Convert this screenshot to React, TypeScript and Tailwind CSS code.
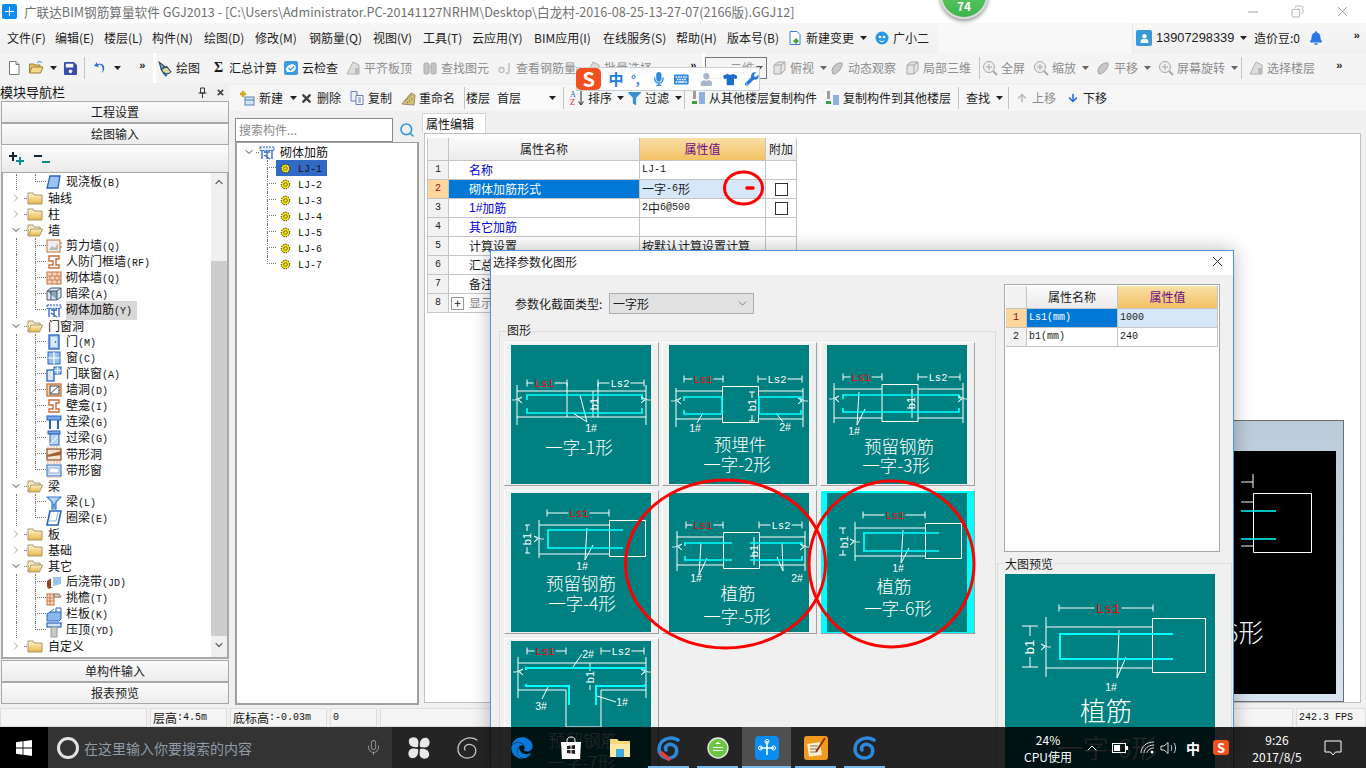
import React from "react";
import { FaEdge, FaMicrophone, FaKeyboard, FaTshirt, FaWrench, FaUser, FaBell, FaSave, FaFilter, FaArrowUp, FaArrowDown, FaTimes } from "react-icons/fa";
import { Mic, ChevronUp, ChevronDown, ChevronRight, X, Minus, Copy, Search } from "lucide-react";

type N = React.ReactNode;
const Ic = ({ children, s = 16, v = "0 0 16 16", c = "" }: { children: N; s?: number; v?: string; c?: string }) => (
  <svg width={s} height={s} viewBox={v} className={"shrink-0 " + c}>{children}</svg>
);

/* SimSun-like mixed text: ascii runs in a 6px-wide mono */
const Sim = ({ t }: { t: string }) => (
  <>
    {t.split(/([\x20-\x7e]+)/).filter(Boolean).map((p, i) =>
      /^[\x20-\x7e]+$/.test(p) ? (
        <span key={i} className="font-['Liberation_Mono',monospace] text-[10px]">{p}</span>
      ) : (
        <span key={i}>{p}</span>
      )
    )}
  </>
);

const Caret = ({ c = "#222" }: { c?: string }) => (
  <svg width="7" height="4" viewBox="0 0 7 4" className="shrink-0"><path d="M0 0H7L3.5 4Z" fill={c} /></svg>
);
const More = () => <span className="font-['Liberation_Mono',monospace] text-[11px] font-bold leading-none text-[#222]">»</span>;
const Div = ({ c = "" }: { c?: string }) => <span className={"h-[22px] w-px shrink-0 bg-[#c4c4c4] " + c} />;

const Tool = ({ w, icon, label, gray, caret, gap = "gap-[3px]" }: { w: string; icon?: N; label?: string; gray?: boolean; caret?: boolean; gap?: string }) => (
  <div className={"flex shrink-0 items-center whitespace-nowrap " + w + " " + gap + " " + (gray ? "text-[#8c8c8c]" : "text-[#1c1c1c]")}>
    {icon}
    {label && <span>{label}</span>}
    {caret && <span className="ml-[3px]"><Caret c={gray ? "#666" : "#222"} /></span>}
  </div>
);

/* ---------- toolbar icons ---------- */
const GrayBox = () => (
  <Ic><path d="M3 5 7 2H14V10L10 14H3Z" fill="#e4e4e4" stroke="#a8a8a8" /><path d="M3 5H10V14M10 5 14 2" fill="none" stroke="#a8a8a8" /></Ic>
);
const GrayBlob = () => (
  <Ic><path d="M3 11C3 6 9 2 13 3 14 7 9 14 4 14Z" fill="#c8c8c8" stroke="#a0a0a0" /></Ic>
);
const GrayMag = () => (
  <Ic><circle cx="7" cy="7" r="5.5" fill="#eee" stroke="#a8a8a8" /><path d="M11 11 15 15" stroke="#a8a8a8" strokeWidth="2" /><path d="M4 7H10M7 4V10" stroke="#aaa" /></Ic>
);
const FileI = () => <Ic><path d="M3.5 1.5H10L13 4.5V14.5H3.5Z" fill="#fff" stroke="#777" /><path d="M10 1.5V4.5H13" fill="#ddd" stroke="#777" /></Ic>;
const OpenI = () => <Ic><path d="M1.5 13V4H6L7 5H12V7" fill="#e8c46c" stroke="#a08030" /><path d="M1.5 13 4 7H15L12.5 13Z" fill="#f5d98a" stroke="#a08030" /><path d="M9 3C11 1 13 1 14 3" fill="none" stroke="#3a7fd0" /></Ic>;
const UndoI = () => <Ic><path d="M5 2 2 6 7 7 6 5C9 4 12 6 10 13 14 9 13 2 5 4Z" fill="#2a6ac8" /></Ic>;
const DrawI = () => <Ic s={17}><path d="M3 2 8 6 5 9Z" fill="#8ab" stroke="#246" /><path d="M5 9C7 14 12 14 14 11L10 6Z" fill="#e0d6a0" stroke="#246" /><path d="M7 12 10 15" stroke="#26a" strokeWidth="2" /></Ic>;
const CloudI = () => <Ic><rect x="1" y="1" width="14" height="14" rx="2" fill="#3a9be0" /><path d="M3 10C3 6 8 3 12 5 14 8 12 12 8 12H4Z" fill="#fff" /><path d="M5.5 8 7.5 10 11 6.5" fill="none" stroke="#3a9be0" strokeWidth="1.4" /></Ic>;
const GrayPage = () => <Ic><path d="M2 14 8 2 14 5V14Z" fill="#ddd" stroke="#b0b0b0" /><path d="M10 8H14V14H10Z" fill="#bbb" /></Ic>;
const Binoc = () => <Ic><rect x="2" y="3" width="5" height="11" rx="1.5" fill="#c4c4c4" stroke="#aaa" /><rect x="9" y="3" width="5" height="11" rx="1.5" fill="#c4c4c4" stroke="#aaa" /><path d="M7 7H9" stroke="#aaa" /></Ic>;
const GrayChain = () => <Ic><circle cx="4.5" cy="10" r="2.5" fill="none" stroke="#bbb" strokeWidth="1.3" /><path d="M12 3V12C12 14 9 14 9 12" fill="none" stroke="#bbb" strokeWidth="1.3" /></Ic>;
const NewI = () => <Ic><rect x="6" y="7" width="9" height="8" fill="#cfe3f6" stroke="#5a80b8" /><path d="M6 10H15" stroke="#5a80b8" /><path d="M4 1V7M1 4H7" stroke="#d2a520" strokeWidth="2.4" /></Ic>;
const CopyI = () => <Ic><path d="M2 1.5H8V11H2Z" fill="#eef" stroke="#6a7fb0" /><path d="M7 5.5H14V14.5H7Z" fill="#fff" stroke="#6a7fb0" /><path d="M9 8H12M9 10H12M9 12H12" stroke="#6a7fb0" /></Ic>;
const RenameI = () => <Ic><path d="M2 14 11 3 15 5 14 15Z" fill="#d8c070" stroke="#987" /><path d="M5 11 12 5M7 13 13 8" stroke="#675" strokeDasharray="1.5 1" /></Ic>;
const SortI = () => (
  <Ic s={18} v="0 0 18 18">
    <text x="2" y="8" fontSize="8" fontFamily="Liberation Serif" fill="#1a5fb4">A</text>
    <text x="2" y="16" fontSize="8" fontFamily="Liberation Serif" fill="#c02020">Z</text>
    <path d="M13 2V15M10.5 12.5 13 16 15.5 12.5" stroke="#222" fill="none" />
  </Ic>
);
const StackI = ({ d }: { d?: boolean }) => (
  <Ic>
    <path d="M3 2H6M3 4H6M3 6H6M3 8H6" stroke="#444" />
    <path d={d ? "M9 6H15M9 8H15M9 10H15M9 12H15M9 14H15" : "M9 3H15M9 5H15M9 7H15M9 9H15M9 11H15M9 13H15"} stroke="#2a6ac8" strokeWidth="1.2" />
    <path d="M2 11H7V14H2Z" fill="#3aa03a" />
  </Ic>
);

/* ---------- tree icons ---------- */
const Folder = ({ open }: { open?: boolean }) =>
  open ? (
    <Ic><defs><linearGradient id="fo" x1="0" y1="0" x2="0" y2="1"><stop offset="0" stopColor="#fff6cc" /><stop offset="1" stopColor="#e6ae3c" /></linearGradient></defs><path d="M1 14V3H6L7 5H13V7" fill="#f8edc0" stroke="#a89870" /><path d="M1 14 4 7H15.5L12.5 14Z" fill="url(#fo)" stroke="#a89870" /></Ic>
  ) : (
    <Ic><defs><linearGradient id="fc" x1="0" y1="0" x2="0" y2="1"><stop offset="0" stopColor="#fff8d8" /><stop offset="1" stopColor="#eab23e" /></linearGradient></defs><path d="M1 14V3H6L7 5H15V14Z" fill="url(#fc)" stroke="#a89870" /></Ic>
  );
const B = "#2a62c0";
const O = "#c8703a";
const treeIcons: Record<string, N> = {
  slab: <path d="M4 2H14L12 14H1Z" fill="#9cc2f0" stroke={B} strokeWidth="1.3" />,
  shear: <><rect x="1" y="2" width="13" height="12" fill="#eee" stroke={O} /><path d="M3 12 6 8 9 10 12 5V12Z" fill="#bbb" /><path d="M15 4V12" stroke={O} strokeDasharray="2 2" /></>,
  door2: <path d="M3 2H13V5H10V11H13V14H3V11H7V7H3Z" fill="#fff" stroke={O} strokeWidth="1.4" />,
  brick: <><rect x="1" y="2" width="14" height="12" fill="#f4d4c0" stroke={O} /><path d="M1 6H15M1 10H15M6 2V6M11 2V6M4 6V10M9 6V10M13 6V10M6 10V14M11 10V14" stroke={O} strokeWidth=".8" /></>,
  hide: <><path d="M1 5 5 2H15V11L11 14H1Z" fill="#dbe8f8" stroke="#456" /><path d="M1 5H11V14M11 5 15 2" fill="#8ab" stroke="#456" /><path d="M5 5V14" stroke="#456" /></>,
  rebar: <><rect x="1" y="3" width="14" height="3.5" fill="#e0ecff" stroke={B} strokeDasharray="2 1" /><path d="M3 6V15M13 6V15M5 8H11M8 8V15M5 11 11 15" fill="none" stroke={B} strokeWidth="1.3" /></>,
  door: <><rect x="3" y="1" width="10" height="14" fill="#9cc2f0" stroke={B} strokeWidth="1.3" /><rect x="5" y="3" width="6" height="10" fill="#dbe8f8" /><circle cx="9.5" cy="8" r=".7" fill="#124" /></>,
  win: <><rect x="2" y="2" width="12" height="12" fill="#9cc2f0" stroke={B} /><path d="M8 2V14M2 8H14" stroke="#fff" strokeWidth="1.2" /></>,
  dw: <><rect x="1" y="4" width="7" height="11" fill="#dbe8f8" stroke={B} strokeWidth="1.3" /><rect x="8" y="1" width="7" height="7" fill="#9cc2f0" stroke={B} /><path d="M11.5 1V8M8 4.5H15" stroke="#fff" /></>,
  hole: <><rect x="1" y="2" width="14" height="12" fill="#f4d4c0" stroke={O} strokeWidth="1.3" /><rect x="4" y="4" width="9" height="8" fill="#fff" stroke="#444" /><path d="M4 12 13 4" stroke="#444" /></>,
  tie: <><rect x="1" y="2" width="14" height="4" fill="#7aa8e8" stroke={B} /><path d="M4 6V15M12 6V15" stroke={B} strokeWidth="2" /></>,
  lintel: <><rect x="2" y="1" width="12" height="3" fill="#7aa8e8" stroke={B} /><rect x="4" y="4" width="9" height="11" fill="#b8d4f4" stroke={B} /><path d="M4 14 12 6" stroke="#fff" /></>,
  strip: <><rect x="1" y="3" width="14" height="11" fill="#f4e4d8" stroke="#8a4a20" strokeWidth="1.2" /><path d="M1 9 15 5V9L1 11Z" fill="#a06030" /><path d="M1 1H15M1 15.5H15" stroke="#f4c8b0" strokeWidth="1.5" strokeDasharray="2 1" /></>,
  strip2: <><rect x="1" y="3" width="14" height="11" fill="#dbe8f8" stroke={B} /><rect x="3" y="6" width="10" height="5" fill="#fff" stroke="#8ab0e0" /><path d="M1 1H15M1 15.5H15" stroke="#f4c8b0" strokeWidth="1.5" strokeDasharray="2 1" /></>,
  beam: <><path d="M1 3H15L10 8V15H6V8Z" fill="#b8d4f4" stroke="#3a80d0" strokeWidth="1.2" /><path d="M6 8 10 15M10 8 6 15" stroke="#3a80d0" /></>,
  ring: <><path d="M4 1H15L12 15H1Z" fill="#fff" stroke={B} strokeWidth="1.6" /><path d="M2 11H10L12 2" fill="none" stroke="#8ab0e0" /></>,
  post: <><path d="M1 7 7 3V13L3 15 1 13Z" fill="#8a4a20" /><path d="M7 3H15V10L7 12Z" fill="#9cc2f0" /><path d="M6 3V13" stroke="#fff" strokeWidth="2" /></>,
  eave: <><rect x="1" y="4" width="7" height="11" fill="#f4d4c0" stroke={O} /><path d="M1 8H8M1 11H8M4 4V15" stroke={O} strokeWidth=".8" /><path d="M8 4H13L15 7H8Z" fill="#ddd" stroke="#8a6a50" /></>,
  rail: <><path d="M1 8 4 6H15V13L13 15H1Z" fill="#8ab8ec" stroke={B} /><path d="M10 6V2H15V6M4 6 8 3" fill="none" stroke={B} /></>,
  press: <><rect x="1" y="1" width="14" height="4" fill="#cfe3f6" stroke={B} strokeWidth="1.2" /><rect x="5" y="5" width="6" height="10" fill="#c8c8c8" stroke="#999" /></>,
};

type Row = { t: string; f?: "o" | "c"; i?: string; last?: boolean; sel?: boolean };
const treeRows: Row[] = [
  { t: "现浇板(B)", i: "slab", last: true },
  { t: "轴线", f: "c" }, { t: "柱", f: "c" }, { t: "墙", f: "o" },
  { t: "剪力墙(Q)", i: "shear" }, { t: "人防门框墙(RF)", i: "door2" }, { t: "砌体墙(Q)", i: "brick" }, { t: "暗梁(A)", i: "hide" }, { t: "砌体加筋(Y)", i: "rebar", last: true, sel: true },
  { t: "门窗洞", f: "o" },
  { t: "门(M)", i: "door" }, { t: "窗(C)", i: "win" }, { t: "门联窗(A)", i: "dw" }, { t: "墙洞(D)", i: "hole" }, { t: "壁龛(I)", i: "door2" }, { t: "连梁(G)", i: "tie" }, { t: "过梁(G)", i: "lintel" }, { t: "带形洞", i: "strip" }, { t: "带形窗", i: "strip2", last: true },
  { t: "梁", f: "o" },
  { t: "梁(L)", i: "beam" }, { t: "圈梁(E)", i: "ring", last: true },
  { t: "板", f: "c" }, { t: "基础", f: "c" }, { t: "其它", f: "o" },
  { t: "后浇带(JD)", i: "post" }, { t: "挑檐(T)", i: "eave" }, { t: "栏板(K)", i: "rail" }, { t: "压顶(YD)", i: "press", last: true },
  { t: "自定义", f: "c" },
];
const dot = "border-dotted border-[#777]";
const Elbow = ({ last, w = "w-[11px]" }: { last?: boolean; w?: string }) => (
  <span className={"flex h-full shrink-0 flex-col " + w}>
    <span className={"h-[8px] w-full border-b border-l " + dot} />
    {!last && <span className={"flex-1 border-l " + dot} />}
  </span>
);
const Chev = ({ open }: { open?: boolean }) =>
  open ? <ChevronDown size={12} strokeWidth={2} className="shrink-0 text-[#444]" /> : <ChevronRight size={12} strokeWidth={2} className="shrink-0 text-[#aaa]" />;

const TreeRow = ({ r }: { r: Row }) =>
  r.f ? (
    <div className="flex h-[16px] items-center pl-[6px]">
      <Chev open={r.f === "o"} />
      <span className={"ml-[2px] w-[3px] border-b " + dot} />
      <Folder open={r.f === "o"} />
      <span className="ml-[5px] whitespace-nowrap"><Sim t={r.t} /></span>
    </div>
  ) : (
    <div className="flex h-[16px] items-center pl-[12px]">
      <span className={"h-full w-[19px] shrink-0 border-l " + dot} />
      <Elbow last={r.last} />
      <Ic>{treeIcons[r.i!]}</Ic>
      <span className={"ml-[4px] whitespace-nowrap " + (r.sel ? "bg-[#d8d8d8] pr-[5px]" : "")}><Sim t={r.t} /></span>
    </div>
  );

const NavBtn = ({ t }: { t: string }) => (
  <div className="flex h-[22px] items-center justify-center border border-[#a8a8a8] bg-gradient-to-b from-[#fbfbfb] to-[#ececec] text-[12px] text-[#1c1c1c]">{t}</div>
);

/* ---------- property tables ---------- */
const thBase = "flex items-center border-b border-r border-[#c4c4c4] ";
const idx = "justify-center bg-[#f2f2f2] ";
const Hdr = "bg-gradient-to-b from-[#fbfbfb] to-[#ebebeb] justify-center ";
const HdrSel = "bg-gradient-to-b from-[#f9dfa6] to-[#f2c263] justify-center text-[#6a0a86] ";

const mainRows: { t: string; v?: string; blue?: boolean; cb?: boolean; sel?: boolean; plus?: boolean }[] = [
  { t: "名称", v: "LJ-1", blue: true },
  { t: "砌体加筋形式", v: "一字-6形", cb: true, sel: true },
  { t: "1#加筋", v: "2 中 6@500", blue: true, cb: true },
  { t: "其它加筋", blue: true },
  { t: "计算设置", v: "按默认计算设置计算" },
  { t: "汇总信息", v: "砌体拉结筋" },
  { t: "备注" },
  { t: "显示样式", plus: true },
];

const MainTable = () => (
  <div className="ml-px grid w-[370px] grid-cols-[21px_191px_126px_31px] grid-rows-[23px_repeat(8,19px)] border-l border-[#c4c4c4] text-[12px] text-[#1c1c1c]">
    <div className={thBase + idx} />
    <div className={thBase + Hdr}>属性名称</div>
    <div className={thBase + HdrSel}>属性值</div>
    <div className={thBase + Hdr}>附加</div>
    {mainRows.map((r, i) => (
      <React.Fragment key={i}>
        <div className={thBase + (r.sel ? "justify-center bg-[#fdd69b] text-[#8a1020]" : idx)}><Sim t={String(i + 1)} /></div>
        <div className={thBase + "whitespace-nowrap " + (r.sel ? "bg-[#0078d7] pl-[20px] text-white" : r.blue ? "pl-[20px] text-[#0000e0]" : r.plus ? "pl-[2px] text-[#888]" : "pl-[20px]")}>
          {r.plus && <span className="mr-[5px] flex h-[13px] w-[13px] items-center justify-center border border-[#999] text-[12px] leading-none text-[#222]">+</span>}
          {r.t.includes("#") ? <><span className="font-['Liberation_Sans',sans-serif]">1#</span>加筋</> : r.t}
        </div>
        <div className={thBase + "relative pl-[2px] " + (r.sel ? "bg-[#d6e8f7]" : "")}>{r.v && <Sim t={r.v} />}</div>
        <div className={thBase + "justify-center"}>{r.cb && <span className="h-[13px] w-[13px] border border-[#333] bg-white" />}</div>
      </React.Fragment>
    ))}
  </div>
);

const ParamTable = () => (
  <div className="h-[268px] w-[216px] border border-[#a8a8a8] bg-white p-px">
    <div className="grid grid-cols-[21px_91px_100px] grid-rows-[23px_19px_19px] text-[12px] text-[#1c1c1c]">
      <div className={thBase + idx} />
      <div className={thBase + Hdr}>属性名称</div>
      <div className={thBase + HdrSel}>属性值</div>
      <div className={thBase + "justify-center bg-[#fdd69b] text-[#8a1020]"}><Sim t="1" /></div>
      <div className={thBase + "bg-[#0078d7] pl-[2px] text-white"}><Sim t="Ls1(mm)" /></div>
      <div className={thBase + "bg-[#d6e8f7] pl-[2px]"}><Sim t="1000" /></div>
      <div className={thBase + idx}><Sim t="2" /></div>
      <div className={thBase + "pl-[2px]"}><Sim t="b1(mm)" /></div>
      <div className={thBase + "pl-[2px]"}><Sim t="240" /></div>
    </div>
  </div>
);

/* ---------- teal diagrams ---------- */
const Dim = ({ x1, x2, y, tx, t, red, fs = 10.5 }: { x1: number; x2: number; y: number; tx: number; t: string; red?: boolean; fs?: number }) => (
  <>
    <path d={`M${x1} ${y - 3.5}V${y + 3.5}M${x1} ${y}H${tx - fs}M${tx + fs} ${y}H${x2}M${x2} ${y - 3.5}V${y + 3.5}`} stroke="#fff" fill="none" />
    <text x={tx} y={y + fs * 0.35} textAnchor="middle" fontFamily="Liberation Mono" fontSize={fs} fill={red ? "#ff0000" : "#fff"}>{t}</text>
  </>
);
const W = ({ d }: { d: string }) => <path d={d} stroke="#fff" strokeWidth="1" fill="none" />;
const Cy = ({ d, w = 1.7 }: { d: string; w?: number }) => <path d={d} stroke="#00ffff" strokeWidth={w} fill="none" />;
const Brk = ({ x, y, flip }: { x: number; y: number; flip?: boolean }) => (
  <path d={flip ? `M${x + 5} ${y}H${x + 2}L${x - 5} ${y - 3}L${x - 1} ${y}L${x - 5} ${y + 3}L${x - 2} ${y}` : `M${x - 5} ${y}H${x - 2}L${x + 5} ${y - 3}L${x + 1} ${y}L${x + 5} ${y + 3}L${x + 2} ${y}`} stroke="#fff" fill="none" strokeWidth=".8" />
);
const Tag = ({ x, y, t }: { x: number; y: number; t: string }) => (
  <text x={x} y={y} textAnchor="middle" fontFamily="Liberation Sans" fontSize="10.5" fill="#fff">{t}</text>
);
const B1 = ({ x, y, fs = 11 }: { x: number; y: number; fs?: number }) => (
  <text transform={`translate(${x} ${y}) rotate(-90)`} textAnchor="middle" fontFamily="Liberation Sans" fontSize={fs} fill="#fff">b1</text>
);
const Lab = ({ x, y, t, fs = 17.5 }: { x: number; y: number; t: string; fs?: number }) => (
  <text x={x} y={y} textAnchor="middle" fontFamily="Noto Sans CJK SC" fontWeight="300" fontSize={fs} fill="#fff">{t}</text>
);

const diagrams: { sel?: boolean; el: N }[] = [
  { el: <>
    <Dim x1={16} x2={56} y={38} tx={33} t="Ls1" red /><Dim x1={87} x2={133} y={38} tx={109} t="Ls2" />
    <W d="M6 46H135M6 72H135M6 40V80M135 40V80M56 38V72M87 38V72M82 46V72M69 50 76 77M62 68 76 77" />
    <Cy d="M16 55V50H131V55M16 63V68H131V63" />
    <Brk x={6} y={55} /><Brk x={135} y={55} flip />
    <B1 x={87} y={59} /><Tag x={80} y={87} t="1#" />
    <Lab x={68} y={109} t="一字-1形" />
  </> },
  { el: <>
    <Dim x1={15} x2={54} y={34} tx={34} t="Ls1" red /><Dim x1={89} x2={133} y={34} tx={108} t="Ls2" />
    <W d="M53.5 41.5H89.5V77.5H53.5ZM7 46H53M7 74H53M90 46H134M90 74H134M7 43V82M134 43V82M34 68 28 78M107 68 114 77M83 47V53M83 70V76M80 47H86M80 76H86" />
    <Cy d="M15 56V52H53V69H15V65M132 56V52H90V69H132V65" />
    <Brk x={7} y={56} /><Brk x={134} y={56} flip />
    <B1 x={87} y={60} /><Tag x={26} y={87} t="1#" /><Tag x={116} y={86} t="2#" />
    <Lab x={71} y={106} t="预埋件" /><Lab x={68} y={126} t="一字-2形" />
  </> },
  { el: <>
    <Dim x1={16} x2={55} y={32} tx={34} t="Ls1" red /><Dim x1={91} x2={133} y={32} tx={111} t="Ls2" />
    <W d="M55 39.5H91V76.5H55ZM7 44H55M91 44H136M7 73H55M91 73H136M7 38V78M136 38V78M32 47 30 80M38 64 30 80M85 44V73" />
    <Cy d="M16 54V50H132V54M16 63V67H132V63" />
    <Brk x={7} y={54} /><Brk x={136} y={54} flip />
    <B1 x={88} y={58} /><Tag x={27} y={90} t="1#" />
    <Lab x={72} y={108} t="预留钢筋" /><Lab x={69} y={127} t="一字-3形" />
  </> },
  { el: <>
    <Dim x1={36} x2={98} y={20} tx={68} t="Ls1" red />
    <W d="M98.5 27.5H134.5V63.5H98.5ZM28 32H98M28 61H98M28 27V65M76 35 74 67M82 52 74 67M14 32H19M14 60H19M16 32V38M16 54V60" />
    <Cy d="M112 37H37V55H112" />
    <Brk x={28} y={46} flip />
    <B1 x={20} y={46} /><Tag x={71} y={77} t="1#" />
    <Lab x={70} y={97} t="预留钢筋" /><Lab x={71} y={117} t="一字-4形" />
  </> },
  { el: <>
    <Dim x1={17} x2={54} y={32} tx={34} t="Ls1" red /><Dim x1={90} x2={133} y={32} tx={112} t="Ls2" />
    <W d="M54.5 39.5H90.5V75.5H54.5ZM8 44H54M90 44H136M8 72H54M90 72H136M8 38V78M136 38V78M32 50 30 82M38 65 30 82M113 50 114 78M108 64 114 78M85 44V72" />
    <Cy d="M16 53V50H63M16 63V67H63M133 53V50H81M133 63V67H81" />
    <Brk x={8} y={54} /><Brk x={136} y={54} flip />
    <B1 x={89} y={58} /><Tag x={27} y={89} t="1#" /><Tag x={128} y={89} t="2#" />
    <Lab x={69} y={107} t="植筋" /><Lab x={68} y={130} t="一字-5形" />
  </> },
  { sel: true, el: <>
    <Dim x1={36} x2={98} y={22} tx={68} t="Ls1" red />
    <W d="M98.5 30.5H134.5V65.5H98.5ZM28 35H98M28 63H98M28 29V68M76 37 74 70M82 55 74 70M12 35H19M12 62H19M16 35V41M16 57V62" />
    <Cy d="M112 40H37V58H112" />
    <Brk x={28} y={49} flip />
    <B1 x={21} y={49} /><Tag x={71} y={79} t="1#" />
    <Lab x={67} y={100} t="植筋" /><Lab x={71} y={122} t="一字-6形" />
  </> },
  { el: <>
    <Dim x1={16} x2={55} y={10} tx={34} t="Ls1" red /><Dim x1={90} x2={133} y={10} tx={110} t="Ls2" />
    <W d="M7 22H135M7 49H55M90 49H135M7 16V57M135 16V57M55 49V86H90V49M62 26 71 13M37 46 31 58M86 55 105 61M79 22V30M79 44V49" />
    <Cy d="M15 29V27H134V29M15 43V45H58V64M134 43V45H85V64" w={2} />
    <Brk x={7} y={31} /><Brk x={135} y={31} flip />
    <B1 x={83} y={36} /><Tag x={77} y={17} t="2#" /><Tag x={30} y={69} t="3#" /><Tag x={111} y={65} t="1#" />
    <Lab x={72} y={106} t="预留钢筋" /><Lab x={70} y={128} t="一字-7形" />
  </> },
];

const Diagram = ({ d }: { d: { sel?: boolean; el: N } }) => (
  <div className={"h-[144px] w-[155px] border-b border-l border-r border-t border-b-[#a0a0a0] border-l-white border-r-[#a0a0a0] border-t-white pl-[6px] pt-[2px] " + (d.sel ? "bg-[#00ffff]" : "")}>
    <svg width="140" height="139" viewBox="0 0 140 139" className="bg-[#008080]">{d.el}</svg>
  </div>
);

const PreviewBig = () => (
  <svg width="210" height="194" viewBox="0 0 210 194" className="bg-[#008080]">
    <Dim x1={54} x2={148} y={34} tx={103} t="Ls1" red fs={13.5} />
    <W d="M147.5 44.5H200.5V98.5H147.5ZM41 53H147M41 94H147M41 43V103M114 56 112 104M121 83 112 104M17 52H33M17 93H33M25 52V62M25 83V93" />
    <Cy d="M168 60H55V85H168" w={2} />
    <Brk x={41} y={73} flip />
    <B1 x={29} y={73} fs={13} />
    <Tag x={106} y={117} t="1#" />
    <Lab x={101} y={147} t="植筋" fs={26} />
    <Lab x={102} y={184} t="一字-6形" fs={26} />
  </svg>
);

const Dialog = () => (
  <div className="absolute left-[490px] top-[250px] z-20 flex h-[518px] w-[744px] flex-col border border-b-0 border-[#4f93d6] bg-[#f0f0f0] shadow-[0_0_18px_rgba(0,0,0,0.28)]">
    <div className="flex h-[24px] shrink-0 items-center justify-between bg-white pb-[3px] pl-[2px] pr-[7px] text-[12px] text-[#1c1c1c]">
      <span>选择参数化图形</span>
      <X size={17} strokeWidth={1.3} className="text-[#222]" />
    </div>
    <div className="flex min-h-0 flex-1">
      <div className="flex w-[505px] shrink-0 flex-col pt-[18px]">
        <div className="flex h-[21px] items-center pl-[24px] text-[12px] text-[#1c1c1c]">
          <span className="w-[94px]">参数化截面类型:</span>
          <div className="flex h-[21px] w-[145px] items-center justify-between border border-[#adadad] bg-[#e1e1e1] pl-[3px] pr-[4px]">
            <span>一字形</span>
            <ChevronDown size={13} strokeWidth={1.3} className="text-[#555]" />
          </div>
        </div>
        <div className="ml-[8px] mt-[17px] flex-1 border border-b-0 border-[#dcdcdc] pl-[4px]">
          <div className="-mt-[10px] ml-[2px] h-[18px] w-fit bg-[#f0f0f0] px-px text-[12px] text-[#1c1c1c]">图形</div>
          <div className="mt-[2px] grid grid-cols-[155px_155px_155px] gap-x-[3px] gap-y-[4px]">
            {diagrams.map((d, i) => <Diagram key={i} d={d} />)}
          </div>
        </div>
      </div>
      <div className="flex flex-1 flex-col pt-[9px]">
        <div className="ml-[8px]"><ParamTable /></div>
        <div className="ml-px mr-px mt-[11px] flex-1 border border-b-0 border-[#dcdcdc] pl-[7px]">
          <div className="-mt-[8px] h-[16px] w-fit bg-[#f0f0f0] text-[12px] leading-[16px] text-[#1c1c1c]">大图预览</div>
          <div className="mt-[2px]"><PreviewBig /></div>
        </div>
      </div>
    </div>
  </div>
);

/* behind the dialog: an enlarged preview window */
const BackWindow = () => (
  <div className="absolute left-[1180px] top-[420px] z-10 h-[282px] w-[164px] border border-[#6e6e6e] bg-gradient-to-b from-[#bccbda] to-[#d8e4f0] pb-[8px] pr-[7px] pt-[30px]">
    <svg width="155" height="243" viewBox="0 0 155 243" className="bg-black">
      <path d="M60 31H72M72 23V37" stroke="#fff" fill="none" />
      <path d="M60 51H72M60 95H72M72.5 42.5H130.5V101.5H72.5Z" stroke="#fff" fill="none" />
      <path d="M60 60H95M60 88H95" stroke="#00ffff" strokeWidth="1.6" />
      <text x="44" y="191" fontFamily="Noto Sans CJK SC" fontWeight="300" fontSize="25" fill="#fff">6形</text>
    </svg>
  </div>
);

const Overlay = () => (
  <svg width="1366" height="768" viewBox="0 0 1366 768" className="pointer-events-none absolute left-0 top-0 z-[25]" fill="none" stroke="#f00" strokeWidth="3">
    <ellipse cx="725.5" cy="564" rx="100" ry="84" />
    <ellipse cx="891.5" cy="564" rx="82.5" ry="83" />
    <ellipse cx="743.5" cy="188" rx="19" ry="16" />
    <path d="M747 188H753" strokeWidth="3.6" strokeLinecap="round" />
  </svg>
);

const Ball = () => (
  <div className="absolute left-[940px] -top-[29px] z-30 flex h-[48px] w-[48px] items-end justify-center rounded-full border-2 border-[#d8d8d8] bg-gradient-to-b from-[#6fd46f] to-[#3cb54c] pb-[4px] text-[12px] font-bold leading-[14px] text-white shadow-[0_2px_4px_rgba(0,0,0,0.45)]">74</div>
);

const Ime = () => (
  <div className="absolute left-[576px] top-[67px] z-40 flex h-[24px] w-[184px] items-center border border-[#c8d0da] bg-white/90 text-[#2d7fd8]">
    <div className="-mt-px ml-[-1px] flex h-[22px] w-[26px] items-center justify-center rounded-[5px] bg-[#f0501e] text-[20px] font-bold leading-none text-white">S</div>
    <span className="ml-[7px] w-[17px] text-[15px] font-bold text-[#1a7de0]">中</span>
    <span className="ml-[6px] w-[13px] text-[12px] font-bold leading-none">°,</span>
    <FaMicrophone size={14} className="ml-[8px] text-[#2d8ae0]" />
    <FaKeyboard size={15} className="ml-[9px] text-[#2d8ae0]" />
    <FaUser size={13} className="ml-[11px] text-[#a8b8c8]" />
    <FaTshirt size={15} className="ml-[10px] text-[#1a6dc8]" />
    <FaWrench size={14} className="ml-[8px] text-[#2a78d8]" />
  </div>
);

/* ---------- taskbar ---------- */
const Under = ({ on, active, children }: { on?: boolean; active?: boolean; children: N }) => (
  <div className={"relative flex h-full w-[49px] shrink-0 items-center justify-center " + (active ? "bg-white/20" : "")}>
    {children}
    {on && <span className={"absolute bottom-0 h-[2px] bg-[#76b9ed] " + (active ? "left-0 right-0" : "left-[4px] right-[4px]")} />}
  </div>
);
const Swirl = ({ c, c2, sw = 3.5 }: { c: string; c2?: string; sw?: number }) => (
  <svg width="26" height="26" viewBox="0 0 26 26" fill="none">
    <path d="M22 5C14 0 3 5 3 14C3 21 10 25 17 22C22 19 22 12 17 10C13 8 8 11 10 15" stroke={c} strokeWidth={sw} strokeLinecap="round" />
    {c2 && <path d="M4 17 14 25" stroke={c2} strokeWidth="4" />}
  </svg>
);

const Taskbar = () => (
  <div className="relative z-30 flex h-[41px] shrink-0 items-stretch bg-black/85 text-white">
    <div className="flex w-[48px] items-center justify-center bg-black">
      <svg width="16" height="16" viewBox="0 0 16 16"><path d="M0 2.2 6.6 1.3V7.6H0ZM7.4 1.2 16 0V7.6H7.4ZM0 8.4H6.6V14.7L0 13.8ZM7.4 8.4H16V16L7.4 14.8Z" fill="#fff" /></svg>
    </div>
    <div className="flex w-[344px] items-center bg-[#333333] pl-[9px]">
      <span className="h-[22px] w-[22px] rounded-full border-[3px] border-[#e4e4e4]" />
      <span className="ml-[5px] text-[14px] text-[#8e9ca8]">在这里输入你要搜索的内容</span>
      <Mic size={17} strokeWidth={1.4} className="ml-[113px] text-[#9a9a9a]" />
    </div>
    <div className="ml-[2px] flex w-[49px] items-center justify-center">
      <svg width="22" height="22" viewBox="0 0 22 22" fill="#e8e8e8"><path d="M10 10C4 11 0 8 1 3 2 0 8-1 10 3 11 5 10 8 10 10ZM12 10C11 4 14 0 19 1 22 2 23 8 19 10 17 11 14 10 12 10ZM12 12C18 11 22 14 21 19 20 22 14 23 12 19 11 17 12 14 12 12ZM10 12C11 18 8 22 3 21 0 20-1 14 3 12 5 11 8 12 10 12Z" /></svg>
    </div>
    <div className="flex w-[49px] items-center justify-center"><Swirl c="#c8c8c8" sw={1.3} /></div>
    <div className="ml-[5px] flex">
      <Under><FaEdge size={22} className="text-[#0a78d7]" /></Under>
      <Under>
        <svg width="22" height="24" viewBox="0 0 22 24"><path d="M7 7V4C7 0 15 0 15 4V7" fill="none" stroke="#fff" /><path d="M1 6H21L20 23H2Z" fill="#fff" /><path d="M7 10 10.5 9.5V13H7ZM11.5 9.4 15 9V13H11.5ZM7 14H10.5V17.5L7 17ZM11.5 14H15V18L11.5 17.6Z" fill="#222" /></svg>
      </Under>
      <Under>
        <svg width="22" height="20" viewBox="0 0 22 20"><path d="M1 1H8L10 3H21V19H1Z" fill="#f6d778" /><path d="M1 6H21V19H1Z" fill="#fae8a4" /><path d="M7 19V11H15V19Z" fill="#3fa8e0" /></svg>
      </Under>
      <Under on><Swirl c="#2a8ae0" c2="#e04040" /></Under>
      <Under on>
        <svg width="24" height="24" viewBox="0 0 24 24"><circle cx="12" cy="12" r="10" fill="#6cc644" stroke="#e8e8e8" strokeWidth="1.4" /><path d="M7 11H17V12H7ZM7 14H17V15H7ZM9 8 12 6 15 8Z" fill="#fff" /></svg>
      </Under>
      <Under on active>
        <svg width="24" height="24" viewBox="0 0 24 24"><rect width="24" height="24" rx="4" fill="#0a8cf0" /><path d="M12 5V19M5 12H19" stroke="#fff" strokeWidth="1.6" /><circle cx="12" cy="5.5" r="2" fill="none" stroke="#fff" /><circle cx="5.5" cy="12" r="2" fill="none" stroke="#fff" /><circle cx="18.5" cy="12" r="2" fill="none" stroke="#fff" /></svg>
      </Under>
      <Under on>
        <svg width="24" height="24" viewBox="0 0 24 24"><rect width="24" height="24" rx="3" fill="#f09a20" /><rect x="4" y="7" width="13" height="13" fill="#fdeec8" transform="rotate(-8 10 13)" /><path d="M6 10H14M6 13H14M6 16H12" stroke="#777" /><path d="M21 2 12 16" stroke="#a03010" strokeWidth="2" /></svg>
      </Under>
      <Under on><Swirl c="#2a8ae0" /></Under>
    </div>
    <div className="ml-[131px] flex w-[56px] flex-col items-center justify-center text-[12px] leading-[17px]">
      <span>24%</span>
      <span>CPU使用</span>
    </div>
    <div className="ml-[8px] flex items-center">
      <ChevronUp size={16} strokeWidth={1.5} className="text-white" />
      <svg width="16" height="10" viewBox="0 0 16 10" className="ml-[12px]"><rect x=".5" y=".5" width="13" height="9" fill="none" stroke="#fff" /><rect x="2" y="2" width="6" height="6" fill="#fff" /><rect x="14" y="3" width="2" height="4" fill="#fff" /></svg>
      <svg width="15" height="13" viewBox="0 0 15 13" fill="none" stroke="#ddd" className="ml-[12px]"><path d="M1 12C1 6 6 1 14 1M4 12C4 8 8 4 14 4M7 12C7 10 10 7 14 7" /><circle cx="12" cy="11" r="1.5" fill="#fff" stroke="none" /></svg>
      <svg width="17" height="14" viewBox="0 0 17 14" fill="none" stroke="#ddd" className="ml-[5px]"><path d="M1 5H4L8 1.5V12.5L4 9H1Z" /><path d="M11 4C12 6 12 8 11 10M14 2C16 5 16 9 14 12" /></svg>
      <span className="ml-[9px] text-[14px] font-bold">中</span>
      <span className="ml-[13px] flex h-[15px] w-[16px] items-center justify-center rounded-[3px] bg-[#f0501e] text-[13px] font-bold leading-none text-white">S</span>
    </div>
    <div className="ml-[18px] flex w-[60px] flex-col items-center justify-center text-[12px] leading-[17px]">
      <span>9:26</span>
      <span>2017/8/5</span>
    </div>
    <div className="ml-[17px] flex items-center">
      <svg width="18" height="16" viewBox="0 0 18 16" fill="none" stroke="#fff"><path d="M1 1H17V12H11.5L9 15 6.5 12H1Z" /></svg>
    </div>
  </div>
);

/* ---------- page ---------- */
const menus: [string, string][] = [
  ["文件(F)", "w-[48px]"], ["编辑(E)", "w-[49px]"], ["楼层(L)", "w-[48px]"], ["构件(N)", "w-[52px]"], ["绘图(D)", "w-[51px]"], ["修改(M)", "w-[54px]"], ["钢筋量(Q)", "w-[64px]"],
  ["视图(V)", "w-[50px]"], ["工具(T)", "w-[49px]"], ["云应用(Y)", "w-[62px]"], ["BIM应用(I)", "w-[69px]"], ["在线服务(S)", "w-[73px]"], ["帮助(H)", "w-[51px]"], ["版本号(B)", "w-[60px]"],
];
const Cell = ({ w, t }: { w: string; t?: string }) => (
  <div className={"flex h-full shrink-0 items-center border border-[#dedede] bg-[#f5f5f5] pl-[2px] text-[12px] " + w}>{t && <Sim t={t} />}</div>
);

export default function App() {
  return (
    <div className="relative flex h-[768px] w-[1366px] flex-col overflow-hidden bg-[#f0f0f0] font-['Noto_Sans_CJK_SC','Liberation_Sans',sans-serif] text-[12px] leading-[16px]">
      {/* title */}
      <div className="flex h-[23px] shrink-0 items-center bg-white pl-[2px] pr-[15px] text-[12.63px] text-[#707070]">
        <span className="flex h-[15px] w-[15px] items-center justify-center rounded-[2px] bg-[#0a8cf0]">
          <svg width="11" height="11" viewBox="0 0 11 11" fill="none" stroke="#fff"><path d="M5.5 1V10M1 5.5H10" /></svg>
        </span>
        <span className="ml-[7px] whitespace-nowrap">广联达BIM钢筋算量软件 GGJ2013 - [C:\Users\Administrator.PC-20141127NRHM\Desktop\白龙村-2016-08-25-13-27-07(2166版).GGJ12]</span>
        <div className="ml-auto flex items-center gap-[30px] text-[#777]">
          <Minus size={16} strokeWidth={1} />
          <Copy size={13} strokeWidth={1} className="-scale-x-100" />
          <X size={17} strokeWidth={1} />
        </div>
      </div>

      {/* menu bar */}
      <div className="flex h-[30px] shrink-0 items-center bg-gradient-to-b from-[#f7f7f7] to-[#f0f0f0] pl-[7px] text-[#1c1c1c]">
        {menus.map(([m, w]) => <span key={m} className={"shrink-0 whitespace-nowrap " + w}>{m}</span>)}
        <Tool w="w-[87px]" label="新建变更" caret icon={<Ic><path d="M3 1.5H10L13 4.5V14.5H3Z" fill="#fff" stroke="#3a80d0" /><path d="M9 8 12 11 9 14 6 11Z" fill="#4aa030" /></Ic>} />
        <Tool w="w-[64px]" label="广小二" icon={<Ic><circle cx="8" cy="8" r="6.5" fill="#2a9ae8" /><circle cx="6" cy="7" r="1.3" fill="#fff" /><circle cx="10" cy="7" r="1.3" fill="#fff" /><path d="M5.5 10.5C7 12 9 12 10.5 10.5" stroke="#fff" fill="none" /></Ic>} />
        <div className="h-[30px] w-[195px] shrink-0 border-r border-[#e8e8e8] bg-[#f8f8f8]" />
        <div className="ml-[3px] flex w-[118px] shrink-0 items-center">
          <span className="flex h-[16px] w-[16px] items-center justify-center rounded-[2px] bg-[#3a9ad8]"><FaUser size={9} className="text-white" /></span>
          <span className="ml-[4px] font-['Liberation_Sans',sans-serif] text-[12.8px]">13907298339</span>
          <span className="ml-[6px]"><Caret /></span>
        </div>
        <span className="w-[55px] whitespace-nowrap">造价豆:0</span>
        <FaBell size={14} className="text-[#2a78e8]" />
        <span className="ml-auto mr-[6px] -mt-[8px]"><More /></span>
      </div>

      {/* toolbar 1 */}
      <div className="flex h-[30px] shrink-0 items-center bg-[#f4f4f4] pl-[6px] text-[#1c1c1c]">
        <Tool w="w-[22px]" icon={<FileI />} />
        <Tool w="w-[35px]" icon={<OpenI />} caret />
        <Tool w="w-[21px]" icon={<FaSave size={15} className="text-[#3a4ea8]" />} />
        <Div />
        <Tool w="w-[46px] pl-[7px]" icon={<UndoI />} caret />
        <span className="ml-[8px] mt-[-8px] w-[14px]"><More /></span>
        <div className="h-[30px] w-[3px] shrink-0 bg-white" />
        <Tool w="w-[54px]" label="绘图" icon={<DrawI />} gap="gap-[3px]" />
        <Tool w="w-[73px] pl-[1px]" label="汇总计算" icon={<span className="w-[15px] text-center font-['Liberation_Serif',serif] text-[14px] font-bold">Σ</span>} />
        <Tool w="w-[62px]" label="云检查" icon={<CloudI />} />
        <Tool w="w-[77px]" label="平齐板顶" gray icon={<GrayPage />} />
        <Tool w="w-[75px]" label="查找图元" gray icon={<Binoc />} />
        <Tool w="w-[88px]" label="查看钢筋量" gray icon={<GrayChain />} />
        <Tool w="w-[105px]" label="批量选择" gray icon={<GrayPage />} />
        <span className="mt-[-8px] w-[12px]"><More /></span>
        <div className="h-[30px] w-[3px] shrink-0 bg-white" />
        <div className="flex h-[22px] w-[62px] shrink-0 items-center border border-[#777] pl-[24px] pr-[3px] text-[#999]"><span>二维</span><span className="ml-auto"><Caret c="#555" /></span></div>
        <Tool w="w-[62px] pl-[4px]" label="俯视" gray caret icon={<GrayBox />} />
        <Tool w="w-[75px]" label="动态观察" gray icon={<GrayBlob />} />
        <Tool w="w-[75px]" label="局部三维" gray icon={<GrayBox />} />
        <Div />
        <Tool w="w-[53px] pl-[2px]" label="全屏" gray icon={<GrayMag />} />
        <Tool w="w-[62px]" label="缩放" gray caret icon={<GrayMag />} />
        <Tool w="w-[63px]" label="平移" gray caret icon={<GrayBlob />} />
        <Tool w="w-[83px]" label="屏幕旋转" gray caret icon={<GrayMag />} />
        <Div />
        <Tool w="w-[88px] pl-[6px]" label="选择楼层" gray icon={<GrayPage />} />
        <span className="ml-[6px] mt-[-8px]"><More /></span>
      </div>

      {/* body */}
      <div className="flex h-[625px] shrink-0">
        {/* left nav */}
        <div className="flex w-[229px] shrink-0 flex-col pl-px">
          <div className="-ml-px flex h-[18px] items-center justify-between pr-[4px] text-[13px] text-[#111]">
            <span>模块导航栏</span>
            <span className="flex items-center gap-[9px]">
              <svg width="9" height="11" viewBox="0 0 9 11" fill="none" stroke="#333"><path d="M2.5 1H6.5V6H2.5ZM0.5 6H8.5M4.5 6V11" /></svg>
              <FaTimes size={9} className="text-[#444]" />
            </span>
          </div>
          <NavBtn t="工程设置" />
          <NavBtn t="绘图输入" />
          <div className="flex h-[27px] items-center gap-[9px] border-x border-[#c8c8c8] bg-gradient-to-b from-[#fdfdfd] to-[#eaeaea] pl-[6px]">
            <svg width="17" height="15" viewBox="0 0 17 15" fill="none" strokeWidth="2"><path d="M5 1V10M1 5H9" stroke="#123" /><path d="M12 6V14M8 10H16" stroke="#0a8a8a" /></svg>
            <svg width="17" height="11" viewBox="0 0 17 11" fill="none" strokeWidth="2"><path d="M0 3H8" stroke="#123" /><path d="M8 9H16" stroke="#0a8a8a" /></svg>
          </div>
          <div className="flex h-[487px] border-2 border-t border-[#a8a8a8] bg-white pl-px text-[12px] text-[#111]">
            <div className="min-w-0 flex-1 pt-px">{treeRows.map((r, i) => <TreeRow key={i} r={r} />)}</div>
            <div className="flex w-[16px] shrink-0 flex-col items-center bg-[#f0f0f0] text-[#666]">
              <ChevronUp size={12} strokeWidth={2.4} className="mt-[3px]" />
              <div className="mt-[73px] h-[375px] w-full bg-[#cdcdcd]" />
              <ChevronDown size={12} strokeWidth={2.4} className="mt-[3px]" />
            </div>
          </div>
          <div className="mt-px"><NavBtn t="单构件输入" /></div>
          <NavBtn t="报表预览" />
        </div>

        {/* middle + right */}
        <div className="flex min-w-0 flex-1 flex-col">
          <div className="mt-[2px] flex h-[26px] shrink-0 items-center bg-[#f6f6f6] pl-[10px] text-[#1c1c1c]">
            <Tool w="w-[59px]" label="新建" caret icon={<NewI />} gap="gap-[4px]" />
            <Tool w="w-[51px] pl-[1px]" label="删除" icon={<span className="flex w-[15px] justify-center"><FaTimes size={13} className="text-[#444]" /></span>} />
            <Tool w="w-[51px]" label="复制" icon={<CopyI />} />
            <Tool w="w-[64px]" label="重命名" icon={<RenameI />} />
            <Div />
            <span className="ml-[1px] w-[29px]">楼层</span>
            <div className="flex h-[22px] w-[65px] shrink-0 items-center justify-between bg-[#fafafa] pl-[2px] pr-[4px]"><span>首层</span><Caret /></div>
            <Div c="ml-[3px]" />
            <Tool w="w-[62px] pl-[4px]" label="排序" caret icon={<SortI />} gap="gap-[2px]" />
            <Tool w="w-[58px] pl-[1px]" label="过滤" caret icon={<span className="flex w-[15px] justify-center"><FaFilter size={13} className="text-[#3a90d8]" /></span>} />
            <Div />
            <Tool w="w-[139px] pl-[5px]" label="从其他楼层复制构件" icon={<StackI />} />
            <Tool w="w-[134px]" label="复制构件到其他楼层" icon={<StackI d />} />
            <Div />
            <Tool w="w-[49px] pl-[7px]" label="查找" caret />
            <Div />
            <Tool w="w-[56px] pl-[5px]" label="上移" gray icon={<span className="flex w-[15px] justify-center"><FaArrowUp size={10} className="text-[#bbb]" /></span>} />
            <Tool w="w-[50px]" label="下移" icon={<span className="flex w-[15px] justify-center"><FaArrowDown size={10} className="text-[#2a6ad0]" /></span>} />
          </div>

          <div className="flex min-h-0 flex-1 pl-[6px]">
            {/* component tree */}
            <div className="flex w-[184px] shrink-0 flex-col pt-[7px]">
              <div className="flex h-[24px] shrink-0 items-center">
                <div className="flex h-[24px] w-[158px] items-center border border-[#8a8a8a] bg-white pl-[3px] text-[#8a8a8a]">搜索构件...</div>
                <Search size={16} strokeWidth={2.4} className="ml-[6px] text-[#3a9ae0]" />
              </div>
              <div className="flex-1 border-2 border-t border-[#a0a0a0] bg-white pl-[6px] pt-[1px] text-[12px] text-[#111]">
                <div className="flex h-[16px] items-center">
                  <Chev open />
                  <span className={"ml-[1px] w-[3px] border-b " + dot} />
                  <Ic>{treeIcons.rebar}</Ic>
                  <span className="ml-[5px]">砌体加筋</span>
                </div>
                {["LJ-1", "LJ-2", "LJ-3", "LJ-4", "LJ-5", "LJ-6", "LJ-7"].map((n, i) => (
                  <div key={n} className="flex h-[16px] items-center pl-[24px]">
                    <Elbow last={i === 6} w="w-[9px]" />
                    <div className={"flex h-full w-[51px] items-center pl-[4px] " + (i === 0 ? "bg-[#316ac5]" : "")}>
                      <svg width="11" height="11" viewBox="0 0 11 11" className="shrink-0"><circle cx="5.5" cy="5.5" r="4.2" fill="#ffe800" stroke="#222" strokeDasharray="1.4 1" /><circle cx="5.5" cy="5.5" r="1.8" fill="none" stroke="#333" strokeWidth=".7" /></svg>
                      <span className="ml-[7px]"><Sim t={n} /></span>
                    </div>
                  </div>
                ))}
              </div>
              <div className="h-[3px] shrink-0" />
            </div>

            {/* property panel */}
            <div className="ml-[6px] flex w-[936px] shrink-0 flex-col pt-[2px]">
              <div className="ml-[-3px] h-[20px] w-[64px] shrink-0 border border-b-0 border-[#d4d4d4] bg-white pl-[3px] pt-[2px] text-[12px] text-[#111]">属性编辑</div>
              <div className="-ml-px flex-1 border border-t border-[#c0c0c0] bg-white pl-px pt-[4px]">
                <MainTable />
              </div>
              <div className="h-[5px] shrink-0" />
            </div>
          </div>
        </div>
      </div>

      {/* status bar */}
      <div className="flex h-[19px] shrink-0 gap-[3px] text-[#111]">
        <Cell w="w-[147px]" />
        <Cell w="w-[77px]" t="层高:4.5m" />
        <Cell w="w-[97px]" t="底标高:-0.03m" />
        <Cell w="w-[47px]" t="0" />
        <Cell w="flex-1" />
        <Cell w="w-[70px]" t="242.3 FPS" />
      </div>

      <Taskbar />

      <BackWindow />
      <Dialog />
      <Overlay />
      <Ball />
      <Ime />
    </div>
  );
}
